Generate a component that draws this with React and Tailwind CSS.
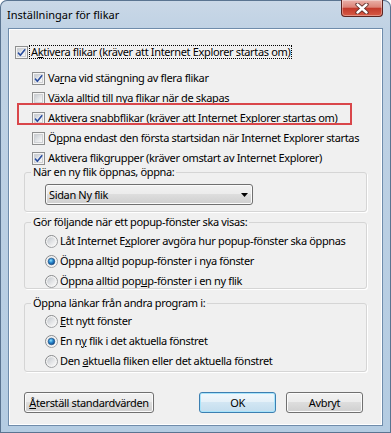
import React from "react";

function CheckBox({ checked }) {
  return (
    <span className="relative w-[13px] h-[13px] shrink-0 border border-[#8e8f8f] bg-[#f4f4f4] p-[1px] flex">
      <span className="flex-1 border border-[#cfd1d4] bg-[linear-gradient(135deg,#c8ccd2_0%,#e4e6e8_55%,#f8f8f8_100%)]" />
      {checked && (
        <svg className="absolute -left-px -top-px" width="13" height="13" viewBox="0 0 13 13">
          <path d="M3 6.6 L5.4 9.3 L10.2 3.2" fill="none" stroke="#ffffff" strokeWidth="3" strokeOpacity="0.6" />
          <path d="M3 6.6 L5.4 9.3 L10.2 3.2" fill="none" stroke="#2d4f9e" strokeWidth="1.7" />
        </svg>
      )}
    </span>
  );
}

function Radio({ checked }) {
  return (
    <svg className="shrink-0" width="13" height="13" viewBox="0 0 13 13">
      <defs>
        <linearGradient id="rim" x1="0" y1="0" x2="1" y2="1">
          <stop offset="0" stopColor="#7b7d80" />
          <stop offset="1" stopColor="#a9abae" />
        </linearGradient>
        <linearGradient id="fill" x1="0" y1="0" x2="1" y2="1">
          <stop offset="0" stopColor="#c3c7cc" />
          <stop offset="0.6" stopColor="#e6e7e9" />
          <stop offset="1" stopColor="#fafafa" />
        </linearGradient>
        <radialGradient id="dot" cx="0.4" cy="0.35" r="0.7">
          <stop offset="0" stopColor="#8fe0fb" />
          <stop offset="0.45" stopColor="#2a8ad0" />
          <stop offset="1" stopColor="#0d3f7e" />
        </radialGradient>
      </defs>
      <circle cx="6.5" cy="6.5" r="6" fill="#f4f4f4" stroke="url(#rim)" strokeWidth="1" />
      <circle cx="6.5" cy="6.5" r="4.3" fill="url(#fill)" />
      {checked && <circle cx="6.5" cy="6.5" r="3.3" fill="url(#dot)" stroke="#1b4f86" strokeWidth="0.6" />}
    </svg>
  );
}

function CheckRow({ checked, children }) {
  return (
    <div className="flex items-center h-[14px]">
      <CheckBox checked={checked} />
      <span className="ml-[3px] leading-[14px] whitespace-nowrap">{children}</span>
    </div>
  );
}

function RadioRow({ checked, children }) {
  return (
    <div className="flex items-center h-[14px]">
      <Radio checked={checked} />
      <span className="ml-[2px] leading-[14px] whitespace-nowrap">{children}</span>
    </div>
  );
}

function Group({ label, className, children }) {
  return (
    <fieldset className={`mx-[15px] border border-[#d5d5d5] rounded-[3px] shadow-[1px_1px_0_#ffffff] ${className}`}>
      <legend className="ml-[6px] px-[2px] leading-[14px]">{label}</legend>
      {children}
    </fieldset>
  );
}

function Button({ children, primary, className }) {
  const look = primary
    ? "border-[#3c7fb1] bg-[linear-gradient(#f1f8fc_0%,#e4f0f8_50%,#d2e6f3_50%,#c3ddee_100%)] shadow-[inset_0_0_0_1px_#a8e4fb]"
    : "border-[#707070] bg-[linear-gradient(#f2f2f2_0%,#ebebeb_50%,#dddddd_50%,#cfcfcf_100%)] shadow-[inset_0_0_0_1px_#fbfbfb]";
  return (
    <div className={`h-[21px] border rounded-[3px] flex items-center justify-center leading-[14px] ${look} ${className}`}>
      {children}
    </div>
  );
}

export default function App() {
  return (
    <div className="w-[391px] h-[433px] rounded-t-[7px] bg-[linear-gradient(180deg,#cad8e7_0%,#c0d2e4_28px,#b4cce2_100%)] shadow-[inset_0_0_0_1px_#5a7491] flex flex-col text-[11px] text-black font-['Noto_Sans','Open_Sans',sans-serif]">
      <div className="h-[28px] flex justify-between items-start shrink-0">
        <span className="pl-[7px] pt-[7px] leading-[15px]">Inställningar för flikar</span>
        <div className="mr-[8px] w-[42px] h-[17px] border border-t-0 border-[#5b2420] rounded-b-[4px] bg-[linear-gradient(#eab1a9_0%,#dc8377_45%,#c33a2b_52%,#d65a45_100%)] shadow-[inset_0_0_0_1px_rgba(255,255,255,0.35)] flex items-center justify-center">
          <svg width="14" height="11" viewBox="0 0 14 11">
            <path d="M2.5 1.5 L11.5 9.5 M11.5 1.5 L2.5 9.5" stroke="#5a2a25" strokeWidth="4.2" strokeLinecap="round" />
            <path d="M2.5 1.5 L11.5 9.5 M11.5 1.5 L2.5 9.5" stroke="#ffffff" strokeWidth="2.4" strokeLinecap="round" />
          </svg>
        </div>
      </div>

      <div className="mx-[8px] h-[398px] shrink-0 border border-[#6f8cab] bg-[#f0f0f0] shadow-[inset_0_0_0_1px_#ffffff] tracking-[-0.35px]">
        <div className="pt-[16px] pl-[6px]">
          <div className="flex items-center h-[14px]">
            <CheckBox checked />
            <span className="ml-px border border-dotted border-black px-px leading-[12px] whitespace-nowrap">
              A<u>k</u>tivera flikar (kräver att Internet Explorer startas om)
            </span>
          </div>

          <div className="ml-[17px] mt-[12px] flex flex-col gap-[6px]">
            <CheckRow checked>
              Va<u>r</u>na vid stängning av flera flikar
            </CheckRow>
            <CheckRow>
              Växla alltid till n<u>y</u>a flikar när de skapas
            </CheckRow>
            <div className="relative">
              <CheckRow checked>
                Ak<u>t</u>ivera snabbflikar (kräver att Internet Explorer startas om)
              </CheckRow>
              <div className="absolute -left-[15px] -top-[8px] w-[335px] h-[22px] border-2 border-[#d9464a]" />
            </div>
            <CheckRow>
              Ö<u>p</u>pna endast den första startsidan när Internet Explorer startas
            </CheckRow>
            <CheckRow checked>
              Aktivera flik<u>g</u>rupper (kräver omstart av Internet Explorer)
            </CheckRow>
          </div>
        </div>

        <Group label="När en ny flik öppnas, öppna:" className="pb-[6px]">
          <div className="ml-[20px] mt-[5px] w-[208px] h-[21px] border border-[#707070] rounded-[3px] bg-[linear-gradient(#f2f2f2_0%,#ebebeb_50%,#dddddd_50%,#cfcfcf_100%)] shadow-[inset_0_0_0_1px_#fbfbfb] flex items-center justify-between pl-[3px] pr-[4px] leading-[14px]">
            <span>Sidan Ny flik</span>
            <svg width="7" height="4" viewBox="0 0 7 4">
              <path d="M0 0 H7 L3.5 4 Z" fill="#000000" />
            </svg>
          </div>
        </Group>

        <Group label="Gör följande när ett popup-fönster ska visas:" className="mt-[3px]">
          <div className="ml-[20px] mt-[5px] flex flex-col gap-[6px]">
            <RadioRow>
              Låt Internet E<u>x</u>plorer avgöra hur popup-fönster ska öppnas
            </RadioRow>
            <RadioRow checked>
              Öppna allt<u>i</u>d popup-fönster i nya fönster
            </RadioRow>
            <RadioRow>
              Öppna alltid pop<u>u</u>p-fönster i en ny flik
            </RadioRow>
          </div>
        </Group>

        <Group label="Öppna länkar från andra program i:" className="mt-[7px] pb-[3px]">
          <div className="ml-[20px] mt-[4px] flex flex-col gap-[6px]">
            <RadioRow>
              <u>E</u>tt nytt fönster
            </RadioRow>
            <RadioRow checked>
              En n<u>y</u> flik i det aktuella fönstret
            </RadioRow>
            <RadioRow>
              Den <u>a</u>ktuella fliken eller det aktuella fönstret
            </RadioRow>
          </div>
        </Group>

        <div className="mt-[20px] pl-[15px] pr-[19px] flex">
          <Button className="w-[130px]">
            <span>
              <u>Å</u>terställ standardvärden
            </span>
          </Button>
          <Button primary className="w-[77px] ml-auto">
            OK
          </Button>
          <Button className="w-[77px] ml-[10px]">Avbryt</Button>
        </div>
      </div>
    </div>
  );
}
